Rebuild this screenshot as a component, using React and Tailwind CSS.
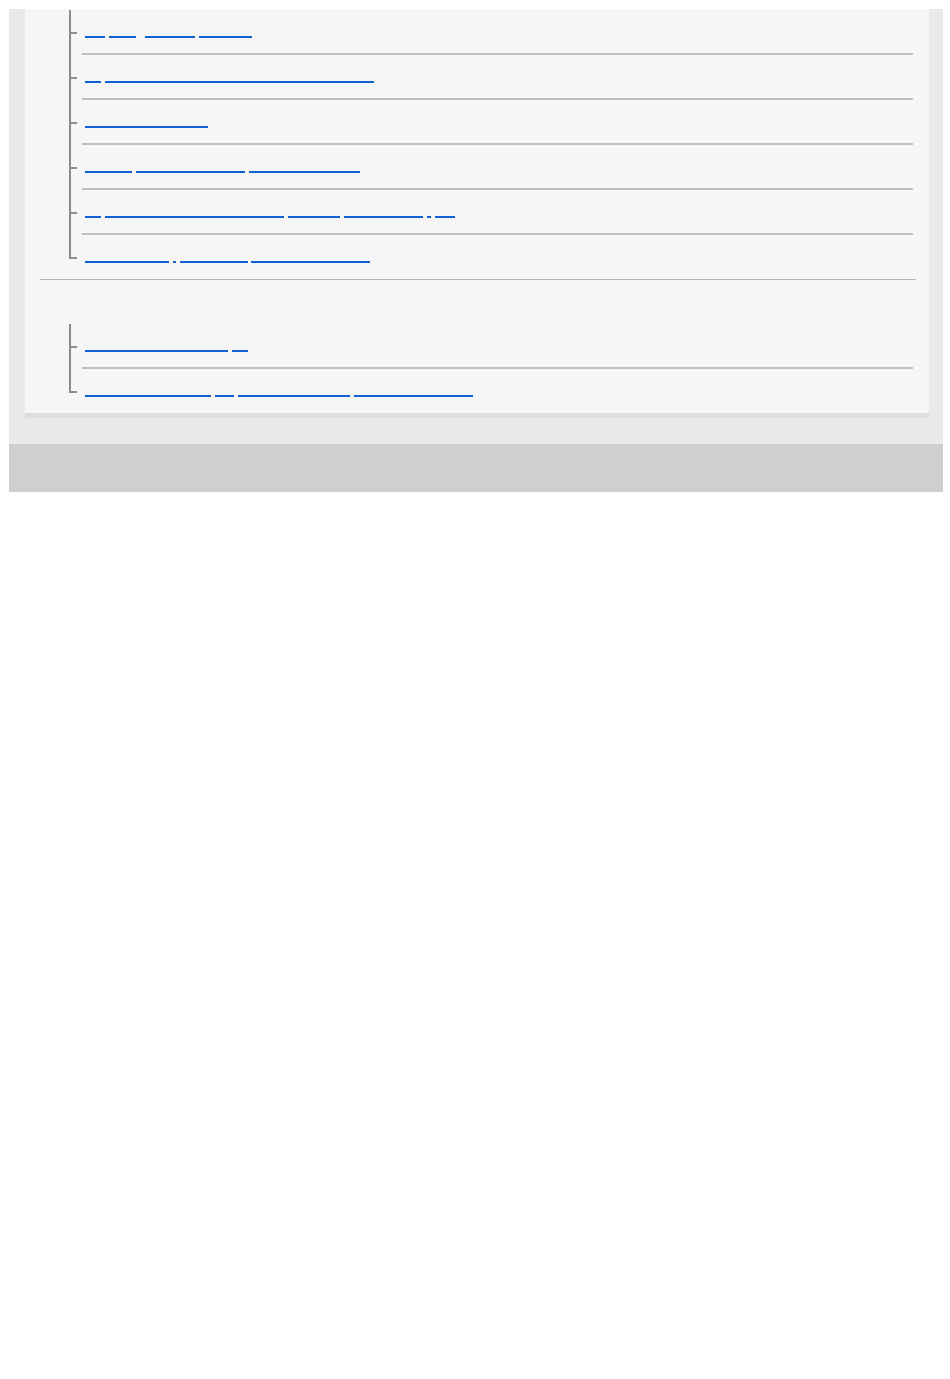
const groupOne = [
  [[85, 105], [109, 136], [145, 195], [199, 252]],
  [[85, 101], [105, 374]],
  [[85, 208]],
  [[85, 132], [136, 245], [249, 360]],
  [[85, 101], [105, 284], [288, 340], [344, 423], [427, 431], [435, 455]],
  [[85, 169], [173, 176], [180, 248], [251, 370]],
];

const groupTwo = [
  [[85, 228], [232, 248]],
  [[85, 211], [215, 234], [238, 350], [354, 473]],
];

// link text isn't drawn in the source, only its underline runs
function LinkLine({ parts }) {
  let prev = 85;
  return (
    <a href="#" className="flex items-start pt-[26px]">
      {parts.map(([from, to], i) => {
        const gap = from - prev;
        prev = to;
        return (
          <span
            key={i}
            className="block h-[2px] border-b-2 border-[#1261d3]"
            style={{ width: to - from, marginLeft: gap }}
          />
        );
      })}
    </a>
  );
}

function TreeRow({ parts, last }) {
  return (
    <li className="flex">
      <div className="flex w-[8px] flex-col">
        <div className="h-[22px] border-l-2 border-[#8a8a8a]" />
        <div className="h-[2px] bg-[#8f8f8f]" />
        {!last && <div className="flex-1 border-l-2 border-[#8a8a8a]" />}
      </div>
      <div
        className={
          "ml-[5px] mr-[16px] h-[43px] flex-1 pl-[3px] " +
          (last ? "" : "box-content border-b-2 border-[#c0c0c0]")
        }
      >
        <LinkLine parts={parts.map(([a, b]) => [a, b])} />
      </div>
    </li>
  );
}

function Tree({ rows }) {
  return (
    <ul className="ml-[44px]">
      {rows.map((parts, i) => (
        <TreeRow key={i} parts={parts} last={i === rows.length - 1} />
      ))}
    </ul>
  );
}

export default function App() {
  return (
    <div className="min-h-[1379px] bg-white pl-[9px] pr-[7px] pt-[9px] font-['Liberation_Sans',sans-serif]">
      <div className="bg-[#e9e9e9] pb-[26px] pl-[16px] pr-[14px]">
        <div className="border-b-[5px] border-[#dedede] bg-[#f6f6f6]">
          <section className="pt-[1px]">
            <Tree rows={groupOne} />
            <div className="ml-[15px] mr-[13px] mt-[1px] border-b border-[#b8b8b8]" />
          </section>
          <section className="pb-[1px] pt-[44px]">
            <Tree rows={groupTwo} />
          </section>
        </div>
      </div>
      <div className="h-[48px] bg-[#cfcfcf]" />
    </div>
  );
}
